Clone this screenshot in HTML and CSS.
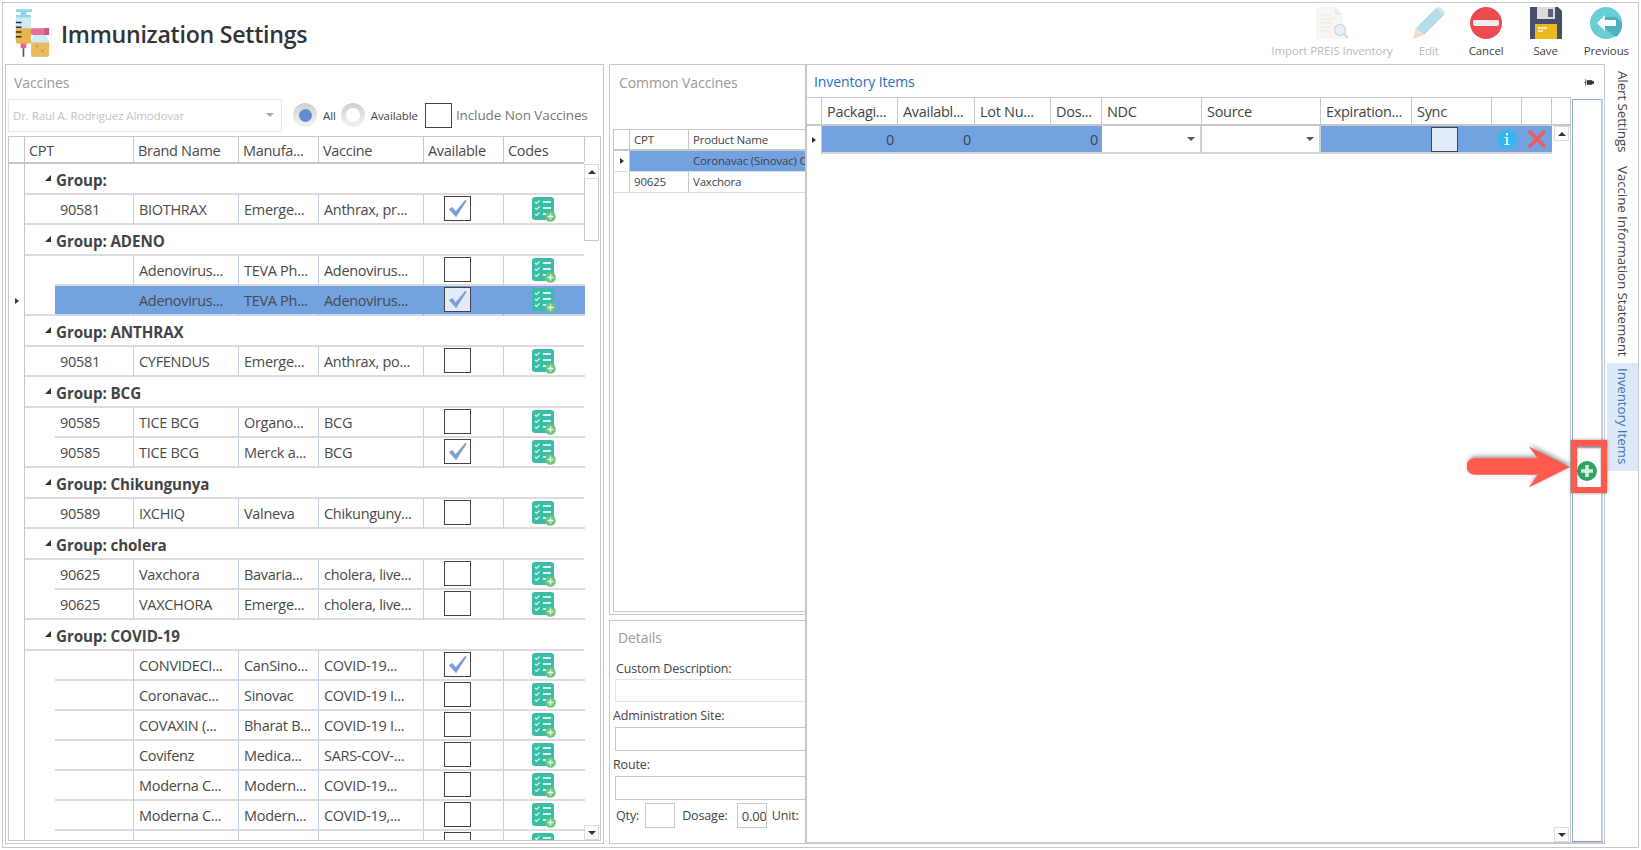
FILE: index.html
```html
<!DOCTYPE html>
<html lang="en">
<head>
<meta charset="utf-8">
<title>Immunization Settings</title>
<link rel="stylesheet" href="styles.css">
</head>
<body>
<svg class="defs" aria-hidden="true">
  <symbol id="codes" viewBox="0 0 24 25">
    <rect x="0" y="0" width="22" height="23" rx="3" fill="#3abda6"/>
    <g fill="none" stroke="#d8f3ec" stroke-width="1.200">
      <path d="M3 5l1.500 1.500L7.500 3.500M3 11l1.500 1.500L7.500 9.500M3 17l1.500 1.500L7.500 15.500"/>
      <path d="M11 5h8M11 11h8M11 17h3" stroke-width="1.800"/>
    </g>
    <circle cx="18.500" cy="19.500" r="5.300" fill="#6cc67e"/>
    <path d="M15.500 19.500h6M18.500 16.500v6" stroke="#e9f8ec" stroke-width="1.500"/>
  </symbol>
  <symbol id="check" viewBox="0 0 27 25">
    <path d="M4 13l4-2 3.500 4.500L22 3l1.500 1L12 22z" fill="#7c9fd6"/>
  </symbol>
</svg>
<div class="app">
  <header class="top">
    <div class="heading">
      <svg class="logo" viewBox="0 0 40 52" aria-hidden="true">
        <path d="M3 1h17v3H14v3h5v3H3V7h5V4H3z" fill="#8fd6ea"/>
        <rect x="3" y="10" width="16" height="27" rx="1" fill="#cfeaf5"/>
        <path d="M3 21h16v14a2 2 0 0 1-2 2H5a2 2 0 0 1-2-2z" fill="#e8b44f"/>
        <path d="M3 15h6M3 20h6M3 25h6M3 30h6" stroke="#2d3038" stroke-width="1.500"/>
        <rect x="8" y="37" width="6" height="5" fill="#e2668e"/>
        <rect x="10.200" y="42" width="1.700" height="9" fill="#555"/>
        <rect x="19" y="21" width="19" height="7" rx="1" fill="#e46f96"/>
        <rect x="33" y="21" width="5" height="7" fill="#c9567f"/>
        <path d="M21 28h15v3l2 3v15a2 2 0 0 1-2 2H21a2 2 0 0 1-2-2V34l2-3z" fill="#cdebf5"/>
        <path d="M19 36h19v13a2 2 0 0 1-2 2H21a2 2 0 0 1-2-2z" fill="#e9bb60"/>
        <circle cx="25" cy="40" r="1.200" fill="#cf8b3a"/><circle cx="31" cy="45" r="1.200" fill="#cf8b3a"/>
      </svg>
      <h1 class="title">Immunization Settings</h1>
    </div>
    <nav class="tools">
      <div class="tool off t-imp">
        <svg class="tool-ic" viewBox="0 0 32 32" aria-hidden="true">
          <path d="M0 0h19l8 8v24H0z" fill="#f7f6f1"/>
          <path d="M19 0l8 8h-8z" fill="#ecebe4"/>
          <path d="M4 8h11M4 12h17M4 16h12M4 20h10M4 24h10" stroke="#eeede6" stroke-width="1.500"/>
          <circle cx="24" cy="23" r="5.500" fill="#e6f2f8" stroke="#cfdbe2" stroke-width="1.500"/>
          <path d="M28 27l4 4" stroke="#c6d7e0" stroke-width="2"/>
        </svg>
        <span>Import PREIS Inventory</span>
      </div>
      <div class="tool off t-edit">
        <svg class="tool-ic" viewBox="0 0 32 32" aria-hidden="true">
          <path d="M23 1l8 7L11 28 3 21z" fill="#b5dce9"/>
          <path d="M3 21l8 7-11 4z" fill="#f3dcc8"/>
          <path d="M23 1l4-1 5 5-1 3z" fill="#cde8f1"/>
        </svg>
        <span>Edit</span>
      </div>
      <div class="tool t-can">
        <svg class="tool-ic" viewBox="0 0 32 32" aria-hidden="true">
          <circle cx="16" cy="16" r="16" fill="#ec4b4f"/>
          <rect x="3" y="13" width="26" height="6" rx="2" fill="#f6eeee"/>
        </svg>
        <span>Cancel</span>
      </div>
      <div class="tool">
        <svg class="tool-ic" viewBox="0 0 32 32" aria-hidden="true">
          <path d="M0 0h28l4 4v28H0z" fill="#454f6c"/>
          <path d="M7 0h18v12H7z" fill="#dcdcdc"/>
          <rect x="18" y="2" width="5" height="8" fill="#5a6277"/>
          <rect x="5" y="17" width="22" height="15" fill="#ecb91c"/>
          <path d="M8 21h9M8 24h5" stroke="#fff" stroke-width="1.500"/>
        </svg>
        <span>Save</span>
      </div>
      <div class="tool">
        <svg class="tool-ic" viewBox="0 0 32 32" aria-hidden="true">
          <circle cx="16" cy="16" r="16" fill="#69ced6"/>
          <path d="M8 16l18 14a16 16 0 0 0 6-14l-6-6H14z" fill="#4fb1bd"/>
          <path d="M15 8l-8 8 8 8v-5h11v-6H15z" fill="#fff"/>
        </svg>
        <span>Previous</span>
      </div>
    </nav>
  </header>

  <main class="work">
    <section class="vaccines">
      <h2 class="ptitle">Vaccines</h2>
      <div class="filters">
        <div class="combo"><span>Dr. Raul A. Rodriguez Almodovar</span><i class="caret pale"></i></div>
        <span class="radio on"></span><span class="rlabel">All</span>
        <span class="radio"></span><span class="rlabel rl2">Available</span>
        <span class="cb fcb"></span><span class="fl">Include Non Vaccines</span>
      </div>
      <div class="vgrid">
        <div class="vmain">
          <div class="row head">
            <span class="rh"></span><span class="c cpth">CPT</span><span class="c brand">Brand Name</span><span class="c manu">Manufa...</span><span class="c vacc">Vaccine</span><span class="c avail">Available</span><span class="c code">Codes</span>
          </div>
          <div class="row group"><span class="rh"></span><span class="gbody"><i class="tri"></i>Group:</span></div>
          <div class="row last"><span class="rh"></span><span class="ind"></span><span class="c cpt">90581</span><span class="c brand">BIOTHRAX</span><span class="c manu">Emerge...</span><span class="c vacc">Anthrax, pr...</span><span class="c avail"><span class="cb"><svg class="ck"><use href="#check"/></svg></span></span><span class="c code"><svg class="ci"><use href="#codes"/></svg></span></div>

          <div class="row group"><span class="rh"></span><span class="gbody"><i class="tri"></i>Group: ADENO</span></div>
          <div class="row"><span class="rh"></span><span class="ind"></span><span class="c cpt"></span><span class="c brand">Adenovirus...</span><span class="c manu">TEVA Ph...</span><span class="c vacc">Adenovirus...</span><span class="c avail"><span class="cb"></span></span><span class="c code"><svg class="ci"><use href="#codes"/></svg></span></div>
          <div class="row sel last"><span class="rh"><i class="ptr"></i></span><span class="ind"></span><span class="c cpt"></span><span class="c brand">Adenovirus...</span><span class="c manu">TEVA Ph...</span><span class="c vacc">Adenovirus...</span><span class="c avail"><span class="cb"><svg class="ck"><use href="#check"/></svg></span></span><span class="c code"><svg class="ci"><use href="#codes"/></svg></span></div>

          <div class="row group"><span class="rh"></span><span class="gbody"><i class="tri"></i>Group: ANTHRAX</span></div>
          <div class="row last"><span class="rh"></span><span class="ind"></span><span class="c cpt">90581</span><span class="c brand">CYFENDUS</span><span class="c manu">Emerge...</span><span class="c vacc">Anthrax, po...</span><span class="c avail"><span class="cb"></span></span><span class="c code"><svg class="ci"><use href="#codes"/></svg></span></div>

          <div class="row group"><span class="rh"></span><span class="gbody"><i class="tri"></i>Group: BCG</span></div>
          <div class="row"><span class="rh"></span><span class="ind"></span><span class="c cpt">90585</span><span class="c brand">TICE BCG</span><span class="c manu">Organo...</span><span class="c vacc">BCG</span><span class="c avail"><span class="cb"></span></span><span class="c code"><svg class="ci"><use href="#codes"/></svg></span></div>
          <div class="row last"><span class="rh"></span><span class="ind"></span><span class="c cpt">90585</span><span class="c brand">TICE BCG</span><span class="c manu">Merck a...</span><span class="c vacc">BCG</span><span class="c avail"><span class="cb"><svg class="ck"><use href="#check"/></svg></span></span><span class="c code"><svg class="ci"><use href="#codes"/></svg></span></div>

          <div class="row group"><span class="rh"></span><span class="gbody"><i class="tri"></i>Group: Chikungunya</span></div>
          <div class="row last"><span class="rh"></span><span class="ind"></span><span class="c cpt">90589</span><span class="c brand">IXCHIQ</span><span class="c manu">Valneva</span><span class="c vacc">Chikunguny...</span><span class="c avail"><span class="cb"></span></span><span class="c code"><svg class="ci"><use href="#codes"/></svg></span></div>

          <div class="row group"><span class="rh"></span><span class="gbody"><i class="tri"></i>Group: cholera</span></div>
          <div class="row"><span class="rh"></span><span class="ind"></span><span class="c cpt">90625</span><span class="c brand">Vaxchora</span><span class="c manu">Bavaria...</span><span class="c vacc">cholera, live...</span><span class="c avail"><span class="cb"></span></span><span class="c code"><svg class="ci"><use href="#codes"/></svg></span></div>
          <div class="row last"><span class="rh"></span><span class="ind"></span><span class="c cpt">90625</span><span class="c brand">VAXCHORA</span><span class="c manu">Emerge...</span><span class="c vacc">cholera, live...</span><span class="c avail"><span class="cb"></span></span><span class="c code"><svg class="ci"><use href="#codes"/></svg></span></div>

          <div class="row group"><span class="rh"></span><span class="gbody"><i class="tri"></i>Group: COVID-19</span></div>
          <div class="row"><span class="rh"></span><span class="ind"></span><span class="c cpt"></span><span class="c brand">CONVIDECI...</span><span class="c manu">CanSino...</span><span class="c vacc">COVID-19...</span><span class="c avail"><span class="cb"><svg class="ck"><use href="#check"/></svg></span></span><span class="c code"><svg class="ci"><use href="#codes"/></svg></span></div>
          <div class="row"><span class="rh"></span><span class="ind"></span><span class="c cpt"></span><span class="c brand">Coronavac...</span><span class="c manu">Sinovac</span><span class="c vacc">COVID-19 I...</span><span class="c avail"><span class="cb"></span></span><span class="c code"><svg class="ci"><use href="#codes"/></svg></span></div>
          <div class="row"><span class="rh"></span><span class="ind"></span><span class="c cpt"></span><span class="c brand">COVAXIN (...</span><span class="c manu">Bharat B...</span><span class="c vacc">COVID-19 I...</span><span class="c avail"><span class="cb"></span></span><span class="c code"><svg class="ci"><use href="#codes"/></svg></span></div>
          <div class="row"><span class="rh"></span><span class="ind"></span><span class="c cpt"></span><span class="c brand">Covifenz</span><span class="c manu">Medica...</span><span class="c vacc">SARS-COV-...</span><span class="c avail"><span class="cb"></span></span><span class="c code"><svg class="ci"><use href="#codes"/></svg></span></div>
          <div class="row"><span class="rh"></span><span class="ind"></span><span class="c cpt"></span><span class="c brand">Moderna C...</span><span class="c manu">Modern...</span><span class="c vacc">COVID-19...</span><span class="c avail"><span class="cb"></span></span><span class="c code"><svg class="ci"><use href="#codes"/></svg></span></div>
          <div class="row"><span class="rh"></span><span class="ind"></span><span class="c cpt"></span><span class="c brand">Moderna C...</span><span class="c manu">Modern...</span><span class="c vacc">COVID-19,...</span><span class="c avail"><span class="cb"></span></span><span class="c code"><svg class="ci"><use href="#codes"/></svg></span></div>
          <div class="row cutrow"><span class="rh"></span><span class="ind"></span><span class="c cpt"></span><span class="c brand"></span><span class="c manu"></span><span class="c vacc"></span><span class="c avail"><span class="cb"></span></span><span class="c code"><svg class="ci"><use href="#codes"/></svg></span></div>
        </div>
        <div class="vscroll">
          <div class="sb-top"><span class="sb-btn"><i class="up"></i></span><span class="sb-thumb"></span></div>
          <span class="sb-btn"><i class="dn"></i></span>
        </div>
      </div>
    </section>

    <div class="midcol">
      <section class="common">
        <h2 class="ptitle">Common Vaccines</h2>
        <div class="cgrid">
          <div class="crow chead"><span class="crh"></span><span class="cc ccpt">CPT</span><span class="cc cname">Product Name</span></div>
          <div class="crow csel"><span class="crh"><i class="ptr"></i></span><span class="cc ccpt"></span><span class="cc cname">Coronavac (Sinovac) COVID</span></div>
          <div class="crow"><span class="crh"></span><span class="cc ccpt">90625</span><span class="cc cname">Vaxchora</span></div>
        </div>
      </section>
      <section class="details">
        <h2 class="ptitle dt">Details</h2>
        <label class="dl dl1">Custom Description:</label>
        <div class="field f1"></div>
        <label class="dl">Administration Site:</label>
        <div class="field"></div>
        <label class="dl dl3">Route:</label>
        <div class="field"></div>
        <div class="qty">
          <span>Qty:</span><span class="qbox"></span>
          <span class="dos">Dosage:</span><span class="qbox q2">0.00</span>
          <span class="unit">Unit:</span>
        </div>
      </section>
    </div>

    <section class="inv">
      <div class="inv-head"><h2 class="ptitle blue">Inventory Items</h2>
        <svg class="pin" viewBox="0 0 10 8" aria-hidden="true"><path d="M3 1.500h5v4H3zM1.500 0v7M0 3.500h2M8 2.500h2v2H8z" fill="#333" stroke="#333" stroke-width=".6"/></svg>
      </div>
      <div class="inv-body">
        <div class="igrid">
          <div class="irow ihead">
            <span class="i0"></span><span class="ic i1">Packagi...</span><span class="ic i2">Availabl...</span><span class="ic i3">Lot Nu...</span><span class="ic i4">Dos...</span><span class="ic i5">NDC</span><span class="ic i6">Source</span><span class="ic i7">Expiration...</span><span class="ic i8">Sync</span><span class="ic i9"></span><span class="ic i10"></span>
          </div>
          <div class="irow idata">
            <span class="i0"><i class="ptr"></i></span>
            <span class="ic i1 num">0</span><span class="ic i2 num">0</span><span class="ic i3"></span><span class="ic i4 num">0</span>
            <span class="ic i5 drop"><i class="caret"></i></span><span class="ic i6 drop"><i class="caret"></i></span>
            <span class="ic i7"></span>
            <span class="ic i8 mid syncc"><span class="cb light"></span></span>
            <span class="ic i9 mid"><svg class="info" viewBox="0 0 20 20" aria-hidden="true"><circle cx="10" cy="10" r="10" fill="#34b7f1"/><rect x="9" y="8" width="2" height="8" fill="#dff4fd"/><rect x="9" y="4" width="2" height="2.500" fill="#dff4fd"/><path d="M7.500 8.500h3M7.500 15.500h5" stroke="#dff4fd"/></svg></span>
            <span class="ic i10 mid"><svg class="del" viewBox="0 0 20 20" aria-hidden="true"><path d="M2 2l16 16M18 2L2 18" stroke="#ef5a5c" stroke-width="3.500"/></svg></span>
          </div>
          <div class="iscroll">
            <span class="sb-btn"><i class="up"></i></span>
            <span class="sb-btn"><i class="dn"></i></span>
          </div>
        </div>
        <div class="pane">
          <svg class="plus" viewBox="0 0 20 20" aria-hidden="true"><circle cx="10" cy="10" r="10" fill="#2ba566"/><path d="M10 4v12M4 10h12" stroke="#d8f0e2" stroke-width="3.500"/></svg>
        </div>
      </div>
    </section>

    <aside class="tabs">
      <span class="tab t1">Alert Settings</span>
      <span class="tab t2">Vaccine Information Statement</span>
      <span class="tab t3">Inventory Items</span>
    </aside>
  </main>
</div>

<svg class="arrow" viewBox="0 0 106 42" aria-hidden="true">
  <path d="M8 12H72L63 0l42 21-42 21 9-13H8a8.500 8.500 0 0 1 0-17z" fill="#ff5a4d"/>
</svg>
<div class="redbox"></div>
</body>
</html>
```

FILE: styles.css
```css
* { box-sizing: border-box; }
html, body { margin: 0; padding: 0; }
body {
  width: 1641px; height: 850px; overflow: hidden; background: #fff; position: relative;
  font-family: "Open Sans", "Noto Sans", sans-serif; color: #444; font-size: 14px;
}
.defs { width: 0; height: 0; position: absolute; }
i { display: block; font-style: normal; }
h1, h2 { margin: 0; font-weight: 400; }

.app { margin: 2px 0 0 2px; width: 1637px; height: 846px; border: 1px solid #c8c8c8; display: flex; flex-direction: column; }

.top { height: 61px; display: flex; justify-content: space-between; flex: none; }
.heading { display: flex; align-items: flex-start; flex: none; }
.logo { width: 38px; height: 50px; margin: 5px 0 0 10px; flex: none; }
.title { font-size: 23.200px; line-height: 30px; margin: 16px 0 0 10px; color: #333; font-weight: 600; letter-spacing: -0.28px; white-space: nowrap; }
.tools { display: flex; gap: 22px; padding: 4px 9px 0 0; }
.tool { display: flex; flex-direction: column; align-items: center; font-size: 11.500px; letter-spacing: -0.1px; color: #444; gap: 4px; min-width: 32px; }
.tool span { line-height: 16px; white-space: nowrap; }
.tool.off span { color: #bbb; }
.tool-ic { width: 32px; height: 32px; display: block; }
.t-imp { margin-right: -2px; }
.t-edit { margin-right: 2px; }
.t-can { margin-right: 4px; }

.work { flex: 1; display: flex; padding-left: 2px; min-height: 0; }
.ptitle { font-size: 14px; color: #999; line-height: 20px; letter-spacing: -0.1px; }

.vaccines { width: 599px; height: 780px; border: 1px solid #c8c8c8; flex: none; padding: 0 2px; display: flex; flex-direction: column; }
.vaccines .ptitle { padding: 8px 0 0 6px; height: 33px; flex: none; }
.filters { display: flex; align-items: center; height: 34px; flex: none; }
.combo { width: 274px; height: 33px; margin-left: 0; border: 1px solid #e6e6e6; display: flex; align-items: center; justify-content: space-between; padding: 0 7px 0 4px; color: #c4c4c4; font-size: 11.500px; letter-spacing: -0.1px; }
.caret { width: 0; height: 0; border-left: 4px solid transparent; border-right: 4px solid transparent; border-top: 4px solid #555; }
.caret.pale { border-top-color: #aaa; }
.radio { width: 24px; height: 24px; border-radius: 50%; background: linear-gradient(#cfcfcf, #eee 80%); display: flex; align-items: center; justify-content: center; flex: none; }
.radio::after { content: ""; width: 14px; height: 14px; border-radius: 50%; background: #fff; }
.radio.on::after { background: #5f8fcf; width: 13px; height: 13px; }
.radio.on { margin-left: 11px; }
.rlabel { font-size: 11.500px; margin: 0 5px 0 6px; letter-spacing: -0.1px; }
.rl2 { margin-right: 7px; }
.cb { width: 27px; height: 25px; border: 1px solid #2b2b2b; display: block; background: #fff; outline: 0.500px solid #444; outline-offset: -1px; flex: none; }
.fl { font-size: 13.500px; margin-left: 4px; color: #777; white-space: nowrap; letter-spacing: -0.1px; }

.vgrid { margin-top: 4px; height: 705px; border: 1px solid #c8c8c8; display: flex; overflow: hidden; flex: none; }
.vmain { width: 575px; flex: none; }
.row { display: flex; height: 30px; }
.row.head { height: 27px; border-bottom: 2px solid #c8c8c8; }
.row.group { height: 31px; }
.rh { width: 16px; flex: none; border-right: 1px solid #c8c8c8; display: flex; align-items: center; justify-content: center; }
.ind { width: 30px; flex: none; }
.row.last .ind { border-bottom: 2px solid #dcdcdc; }
.c { flex: none; border-right: 1px solid #c4d1e2; border-bottom: 2px solid #dcdcdc; padding-left: 5px; font-size: 14.500px; line-height: 30px; white-space: nowrap; overflow: hidden; letter-spacing: -0.3px; color: #4a4a4a; }
.head .c { border-bottom: 0; border-right-color: #c8c8c8; line-height: 27px; padding-left: 4px; }
.cpth { width: 109px; }
.cpt { width: 79px; }
.brand { width: 105px; }
.manu { width: 80px; }
.vacc { width: 105px; }
.avail { width: 80px; }
.code { width: 81px; border-right: 0 !important; }
.row.head .code { border-right: 1px solid #c8c8c8 !important; }
.row:not(.head) .avail { display: flex; justify-content: center; padding: 1px 13px 0 0; }
.row:not(.head) .code { display: flex; justify-content: center; padding: 2px 0 0; }
.ci { width: 24px; height: 25px; display: block; margin-right: 2px; }
.ck { width: 25px; height: 23px; display: block; }
.gbody { flex: 1; border-bottom: 2px solid #dcdcdc; display: flex; align-items: center; padding: 2px 0 0 20px; font-weight: 700; font-size: 15.200px; color: #444; letter-spacing: -0.1px; white-space: nowrap; }
.tri { width: 0; height: 0; border-style: solid; border-width: 0 0 6px 6px; border-color: transparent transparent #333 transparent; margin-right: 5px; margin-top: -3px; }
.ptr { width: 0; height: 0; border-top: 3.500px solid transparent; border-bottom: 3.500px solid transparent; border-left: 4px solid #333; }
.sel .c { background: #72a2e0; border-bottom-color: #d0d8e4; border-right-color: #72a2e0; }
.sel .cb { background: #e2ebf8; }
.vscroll { flex: 1; display: flex; flex-direction: column; justify-content: space-between; padding: 27px 1px 0 0; }
.sb-top { display: flex; flex-direction: column; }
.sb-btn { height: 15px; width: 15px; border: 1px solid #dcdcdc; display: flex; align-items: center; justify-content: center; background: #fff; flex: none; }
.sb-thumb { height: 62px; width: 15px; border: 1px solid #c8c8c8; border-top: 0; }
.up { width: 0; height: 0; border-left: 4px solid transparent; border-right: 4px solid transparent; border-bottom: 4px solid #333; }
.dn { width: 0; height: 0; border-left: 4px solid transparent; border-right: 4px solid transparent; border-top: 4px solid #333; }

.midcol { width: 200px; margin-left: 5px; display: flex; flex-direction: column; gap: 5px; height: 780px; flex: none; overflow: hidden; }
.common { height: 551px; border: 1px solid #c8c8c8; border-right: 0; padding: 0 0 2px 3px; display: flex; flex-direction: column; overflow: hidden; flex: none; }
.common .ptitle { padding: 8px 0 0 6px; height: 64px; flex: none; }
.cgrid { flex: 1; border: 1px solid #c8c8c8; border-right: 0; font-size: 11.500px; letter-spacing: -0.2px; }
.crow { display: flex; height: 21px; border-bottom: 1px solid #dcdcdc; }
.chead { border-bottom: 2px solid #c8c8c8; height: 21px; }
.crh { width: 16px; flex: none; border-right: 1px solid #c8c8c8; display: flex; align-items: center; justify-content: center; }
.cc { padding-left: 4px; line-height: 19px; white-space: nowrap; flex: none; overflow: hidden; }
.ccpt { width: 59px; border-right: 1px solid #c8c8c8; }
.cname { width: 120px; }
.csel .cc { background: #72a2e0; border-right-color: #72a2e0; }

.details { flex: 1; border: 1px solid #c8c8c8; border-right: 0; padding: 0 0 0 3px; overflow: hidden; font-size: 12.500px; letter-spacing: -0.15px; }
.dt { padding: 7px 0 0 5px; height: 37px; }
.dl { display: block; line-height: 17px; height: 20px; white-space: nowrap; }
.dl1 { padding: 2px 0 0 3px; height: 21px; }
.dl3 { margin-top: 1px; }
.field { margin: 0 0 5px 2px; height: 24px; border: 1px solid #c8c8c8; border-right: 0; width: 194px; }
.f1 { border-color: #e4e4e4; height: 23px; }
.qty { display: flex; align-items: center; margin-top: -2px; padding-left: 3px; height: 25px; white-space: nowrap; }
.qbox { width: 30px; height: 25px; border: 1px solid #c8c8c8; margin-left: 6px; display: flex; align-items: center; padding-left: 4px; overflow: hidden; flex: none; }
.dos { margin-left: 7px; }
.q2 { margin-left: 9px; font-size: 13px; }
.unit { margin-left: 5px; }

.inv { width: 800px; height: 780px; margin-left: -4px; border: 1px solid #c8c8c8; border-left-width: 2px; border-bottom-width: 2px; background: #fff; display: flex; flex-direction: column; flex: none; position: relative; }
.inv-head { height: 32px; display: flex; justify-content: space-between; align-items: flex-start; flex: none; padding: 7px 10px 0 7px; }
.blue { color: #2a6ebd; line-height: 20px; }
.pin { width: 10px; height: 8px; margin-top: 7px; }
.inv-body { flex: 1; display: flex; min-height: 0; }
.igrid { width: 764px; border: 1px solid #c8c8c8; border-bottom: 0; border-left: 0; position: relative; flex: none; }
.irow { display: flex; height: 28px; }
.ihead { border-bottom: 2px solid #c8c8c8; }
.i0 { width: 15px; flex: none; border-right: 1px solid #c8c8c8; display: flex; align-items: center; justify-content: center; }
.ic { flex: none; padding: 0 4px 0 5px; font-size: 14.500px; letter-spacing: -0.3px; border-right: 1px solid #c8c8c8; white-space: nowrap; overflow: hidden; line-height: 28px; }
.idata .ic { background: #72a2e0; border-right: 0; border-bottom: 2px solid #d6d6d6; height: 28px; line-height: 27px; }
.i1 { width: 76px; } .i2 { width: 77px; } .i3 { width: 76px; } .i4 { width: 51px; }
.i5 { width: 100px; } .i6 { width: 119px; } .i7 { width: 91px; } .i8 { width: 80px; }
.i9 { width: 30px; } .i10 { width: 30px; }
.num { text-align: right; }
.idata .drop { background: #fff; display: flex; align-items: center; justify-content: flex-end; padding-right: 5px; border-right: 2px solid #d0d0d0; }
.idata .mid { display: flex; align-items: center; justify-content: center; padding: 0; }
.idata .syncc { padding: 0 15px 0 0; }
.info { width: 20px; height: 20px; }
.del { width: 20px; height: 20px; }
.cb.light { background: #e2ebf8; }
.iscroll { position: absolute; right: 1px; top: 28px; bottom: 0; display: flex; flex-direction: column; justify-content: space-between; }

.pane { width: 31px; margin: 2px 0 0 1px; border: 1px solid #8fb0dc; border-right: 2px solid #b9d0e8; border-bottom-color: #7f9fcf; display: flex; justify-content: center; padding-top: 361px; flex: none; }
.plus { width: 20px; height: 20px; }

.tabs { flex: 1; display: flex; flex-direction: column; padding: 4px 0 0 2px; }
.tab { writing-mode: vertical-rl; font-size: 13.400px; letter-spacing: -0.1px; display: flex; align-items: center; white-space: nowrap; flex: none; width: 31px; }
.t1 { height: 89px; padding-top: 3px; }
.t2 { height: 206px; padding-top: 9px; }
.t3 { height: 108px; background: #dce9f7; color: #3f74bd; padding-top: 5px; }

.arrow { position: absolute; left: 1467px; top: 446px; width: 104px; height: 42px; filter: drop-shadow(1px -2px 2px rgba(0,0,0,.4)); }
.redbox { position: absolute; left: 1571px; top: 440px; width: 36px; height: 53px; border: 6px solid #ff5a4d; box-shadow: 0 0 3px rgba(0,0,0,.45), inset 0 2px 2px rgba(0,0,0,.45); }
```
